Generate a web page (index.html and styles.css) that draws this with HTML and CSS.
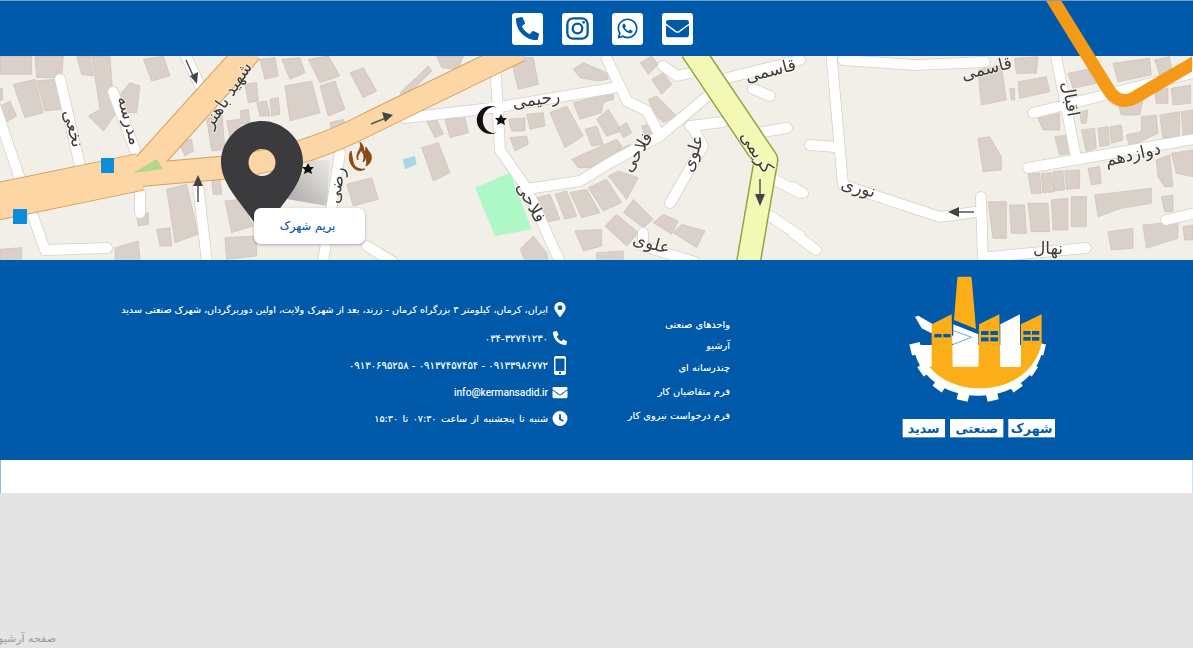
FILE: index.html
```html
<!DOCTYPE html>
<html lang="fa">

<head>
    <meta charset="UTF-8">
    <title>شهرک صنعتی سدید</title>
    <link rel="stylesheet" href="styles.css">
</head>

<body>
    <div class="page">
        <header class="social-bar">
            <a class="social-icon" href="#">
                <svg viewBox="0 0 512 512"><path d="M497.39 361.8l-112-48a24 24 0 0 0-28 6.9l-49.6 60.6A370.66 370.66 0 0 1 130.6 204.11l60.6-49.6a23.94 23.94 0 0 0 6.9-28l-48-112A24.16 24.16 0 0 0 122.6.61l-104 24A24 24 0 0 0 0 48c0 256.5 207.9 464 464 464a24 24 0 0 0 23.4-18.6l24-104a24.29 24.29 0 0 0-14.01-27.6z"/></svg>
            </a>
            <a class="social-icon" href="#">
                <svg viewBox="0 0 24 24"><rect class="line-icon" x="1.4" y="1.4" width="21.2" height="21.2" rx="6"/><circle class="line-icon" cx="12" cy="12" r="5"/><circle cx="18.4" cy="5.6" r="1.4"/></svg>
            </a>
            <a class="social-icon" href="#">
                <svg viewBox="0 0 448 512"><path d="M380.9 97.1C339 55.1 283.2 32 223.9 32c-122.4 0-222 99.6-222 222 0 39.1 10.2 77.3 29.6 111L0 480l117.7-30.9c32.4 17.7 68.9 27 106.1 27h.1c122.3 0 224.1-99.6 224.1-222 0-59.3-25.2-115-67.1-157zm-157 341.6c-33.2 0-65.7-8.9-94-25.7l-6.7-4-69.8 18.3L72 359.2l-4.4-7c-18.5-29.4-28.2-63.3-28.2-98.2 0-101.7 82.8-184.5 184.6-184.5 49.3 0 95.6 19.2 130.4 54.1 34.8 34.9 56.2 81.2 56.1 130.5 0 101.8-84.9 184.6-186.6 184.6zm101.2-138.2c-5.5-2.8-32.8-16.2-37.9-18-5.1-1.9-8.8-2.8-12.5 2.8-3.7 5.6-14.3 18-17.6 21.8-3.2 3.7-6.5 4.2-12 1.4-32.6-16.3-54-29.1-75.5-66-5.7-9.8 5.7-9.1 16.3-30.3 1.8-3.7.9-6.9-.5-9.7-1.4-2.8-12.5-30.1-17.1-41.2-4.5-10.8-9.1-9.3-12.5-9.5-3.2-.2-6.9-.2-10.6-.2-3.7 0-9.7 1.4-14.8 6.9-5.1 5.6-19.4 19-19.4 46.3 0 27.3 19.9 53.7 22.6 57.4 2.8 3.7 39.1 59.7 94.8 83.8 35.2 15.2 49 16.5 66.6 13.9 10.7-1.6 32.8-13.4 37.4-26.4 4.6-13 4.6-24.1 3.2-26.4-1.3-2.5-5-3.9-10.5-6.6z"/></svg>
            </a>
            <a class="social-icon" href="#">
                <svg viewBox="0 0 512 512"><path d="M502.3 190.8c3.9-3.1 9.7-.2 9.7 4.7V400c0 26.5-21.5 48-48 48H48c-26.5 0-48-21.5-48-48V195.6c0-5 5.7-7.8 9.7-4.7 22.4 17.4 52.1 39.5 154.1 113.6 21.1 15.4 56.7 47.8 92.2 47.6 35.7.3 72-32.8 92.3-47.6 102-74.1 131.6-96.3 154-113.7zM256 320c23.2.4 56.6-29.2 73.4-41.4 132.7-96.3 142.8-104.7 173.4-128.7 5.8-4.5 9.2-11.5 9.2-18.9v-19c0-26.5-21.5-48-48-48H48C21.5 64 0 85.5 0 112v19c0 7.4 3.4 14.3 9.2 18.9 30.6 23.9 40.7 32.4 173.4 128.7 16.8 12.2 50.2 41.8 73.4 41.4z"/></svg>
            </a>
            <svg class="route" viewBox="0 0 1193 110"><path d="M1051 -6L1109 88Q1119 105 1135 97L1200 59"/></svg>
        </header>

        <section class="map">
            <svg class="map-tiles" viewBox="0 56 1193 204">
                <defs>
                    <path id="streets" d="M60 79L80 166M113 92L135 150M-5 105L20 179M33 216L45 250L107 248M140 193V213M197 176L207 262M183 50L200 86M340 153L323 262M367 246L393 262M405 118L500 107L613 88M495 60L500 150L527 189L560 262M527 189L580 181L613 161L660 136L710 94M607 59L627 101L647 111L660 136M690 126L723 122M757 133L787 128M693 128L703 146L670 203M643 233V246L695 262M773 179L800 193M770 216L800 236M723 79L800 60M843 60L916 65L985 62M663 66L677 76L690 73M753 89L770 96M831 50L843 185M810 145L836 147M843 185L940 217L975 212M981 197L983 262M793 187L803 193M793 233L816 250M990 257L1086 248M1028 168L1200 138M1033 113L1200 71M1056 56L1076 157M1166 220L1200 212"/>
                    <linearGradient id="pin-shade" x1="0" y1="1" x2="1" y2="0">
                        <stop offset="0" stop-color="#a9a7a5"/>
                        <stop offset="1" stop-color="#ebe9e5"/>
                    </linearGradient>
                </defs>
                <rect class="ground" x="0" y="56" width="1193" height="204"/>

                <!-- buildings, coordinates at 3x so they are easier to read off -->
                <g class="buildings" transform="translate(0 56) scale(.3333)">
                    <polygon points="0,0 95,0 95,55 0,55"/><polygon points="105,0 190,0 185,65 110,65"/><polygon points="40,85 105,70 130,170 75,185"/><polygon points="110,75 165,70 185,160 135,165"/><polygon points="0,150 30,135 50,180 15,200"/><polygon points="0,95 8,100 8,130 0,135"/><polygon points="230,0 270,0 280,60 245,55"/><polygon points="275,0 330,0 340,140 390,80 420,90 410,170 350,170 310,225 265,180 300,160"/><polygon points="430,10 490,0 510,60 455,75"/><polygon points="780,10 825,5 835,60 795,70"/><polygon points="845,10 900,5 915,50 870,70"/><polygon points="925,10 985,0 1020,60 960,80"/><polygon points="1050,50 1090,35 1130,105 1090,125"/><polygon points="960,90 1005,75 1035,160 985,180"/><polygon points="855,90 935,75 960,170 870,195"/><polygon points="735,85 770,80 775,135 745,140"/><polygon points="770,140 800,135 810,180 780,180"/><polygon points="810,130 835,125 840,175 815,180"/><polygon points="620,190 665,165 675,280 635,285"/><polygon points="680,195 720,190 725,235 690,245"/><polygon points="720,165 745,160 750,200 725,205"/><polygon points="990,200 1030,190 1040,215 995,225"/><polygon points="535,255 575,250 580,285 555,300"/><polygon points="635,375 660,370 665,415 640,415"/><polygon points="500,400 560,385 595,535 525,560"/><polygon points="675,435 720,430 760,510 695,530"/><polygon points="470,520 510,515 515,570 480,570"/><polygon points="410,480 445,470 445,505 415,510"/><polygon points="1040,385 1115,365 1135,430 1060,450"/><polygon points="675,545 770,540 770,600 680,610"/><polygon points="345,575 415,555 420,615 345,615"/><polygon points="0,580 65,575 65,615 0,615"/>
                </g>
                <g class="buildings" transform="translate(400 56) scale(.3333)">
                    <polygon points="0,110 85,30 95,45 15,125"/><polygon points="110,0 190,0 175,40 125,35"/><polygon points="330,0 400,5 415,85 355,100"/><polygon points="520,40 550,20 620,50 625,70 590,75 540,65"/><polygon points="720,20 755,0 775,25 745,55"/><polygon points="755,70 790,50 815,85 785,115"/><polygon points="745,130 770,120 830,180 790,200 760,170"/><polygon points="520,140 640,110 640,130 610,140 605,170 540,190"/><polygon points="450,170 500,150 550,240 495,275"/><polygon points="590,190 625,160 665,225 620,240"/><polygon points="655,215 680,200 695,230 670,245"/><polygon points="555,220 590,210 610,265 575,270"/><polygon points="515,310 650,250 665,270 650,300 570,335 535,335"/><polygon points="650,285 690,265 705,285 665,310"/><polygon points="725,210 745,205 755,235 735,240"/><polygon points="80,195 110,190 130,235 105,245"/><polygon points="135,190 195,185 205,230 150,245"/><polygon points="325,190 375,185 375,225 335,225"/><polygon points="380,175 430,170 435,210 390,220"/><polygon points="330,245 380,240 385,265 345,285"/><polygon points="65,275 115,260 150,350 100,375"/><polygon points="410,425 450,415 480,490 435,500"/><polygon points="465,415 500,405 530,480 495,490"/><polygon points="510,410 560,400 600,470 545,485"/><polygon points="565,395 620,370 665,440 610,465"/><polygon points="625,360 655,345 715,365 680,430"/><polygon points="670,470 700,430 760,490 730,515"/><polygon points="615,510 650,475 715,530 680,570"/><polygon points="760,500 790,475 835,495 815,535"/><polygon points="820,530 845,505 915,525 890,575"/><polygon points="525,525 605,520 605,570 550,585"/><polygon points="360,580 400,540 440,590 445,615 375,615"/><polygon points="590,590 670,585 670,615 590,615"/>
                    <polygon class="park" points="225,395 330,350 395,520 285,540"/>
                    <polygon class="pool" points="8,310 45,300 50,325 15,340"/>
                </g>
                <g class="buildings" transform="translate(793 0) scale(.3333)">
                    <polygon points="555,210 625,195 640,300 565,315"/><polygon points="665,175 735,170 730,220 670,220"/><polygon points="675,245 760,230 770,275 680,295"/><polygon points="650,265 665,265 665,300 655,300"/><polygon points="825,220 900,205 910,250 840,265"/><polygon points="960,190 1070,175 1075,225 975,245"/><polygon points="1085,180 1130,170 1140,230 1100,225"/><polygon points="1085,270 1125,265 1125,310 1090,310"/><polygon points="1135,265 1193,255 1193,310 1140,315"/><polygon points="975,310 1050,300 1040,345 985,345"/><polygon points="735,355 800,340 800,390 750,390"/><polygon points="860,335 885,330 880,370 865,370"/><polygon points="1045,350 1090,345 1095,400 1010,440 1000,405 1045,395"/><polygon points="1100,345 1160,335 1160,410 1110,415"/><polygon points="1165,335 1200,330 1200,410 1170,405"/><polygon points="785,410 825,405 835,460 800,465"/><polygon points="865,390 905,385 910,445 880,455"/><polygon points="915,385 945,380 950,435 920,440"/><polygon points="950,380 985,375 990,420 955,430"/><polygon points="555,415 590,410 625,470 625,510 570,515"/><polygon points="705,520 740,520 745,580 715,580"/><polygon points="745,520 775,518 785,575 750,578"/><polygon points="780,515 810,512 815,570 785,572"/><polygon points="815,512 860,510 860,565 820,568"/><polygon points="885,505 920,500 925,550 895,555"/><polygon points="1090,480 1130,465 1140,560 1115,560 1095,530"/><polygon points="1135,460 1200,450 1200,530 1150,520"/><polygon points="905,585 1075,565 1075,610 985,625 915,650"/><polygon points="1105,590 1140,585 1140,635 1115,635"/><polygon points="585,605 640,605 640,715 600,715"/><polygon points="650,615 695,615 700,700 655,700"/><polygon points="705,610 765,610 770,695 715,695"/><polygon points="775,600 825,595 825,690 780,690"/><polygon points="835,590 880,590 880,680 835,680"/><polygon points="945,695 1020,685 1020,745 955,750"/><polygon points="1050,675 1155,665 1155,715 1060,745"/><polygon points="1170,680 1200,675 1200,720 1175,720"/>
                </g>
                <polygon points="287,199 327,206 330,160 310,160" fill="url(#pin-shade)"/>

                <use href="#streets" class="street-casing"/>
                <use href="#streets" class="street-fill"/>

                <path class="secondary-casing" d="M692 50L766 160L748 265"/>
                <path class="secondary-fill" d="M692 50L766 160L748 265"/>

                <path class="primary-casing" d="M-10 203L140 172"/>
                <path class="primary-casing thin" d="M140 175L220 168Q300 160 370 123L520 50"/>
                <path class="primary-casing branch" d="M140 172L250 50"/>
                <path class="primary-fill" d="M-10 203L140 172"/>
                <path class="primary-fill thin" d="M140 175L220 168Q300 160 370 123L520 50"/>
                <path class="primary-fill branch" d="M140 172L250 50"/>
                <polygon class="island" points="133,173 157,159 163,169"/>

                <rect class="bus-stop" x="101" y="158" width="13" height="15"/>
                <rect class="bus-stop" x="13" y="209" width="14" height="15"/>

                <g class="street-labels">
                    <text transform="translate(232 98) rotate(-57)">شهید باهنر</text>
                    <text transform="translate(124 122) rotate(75)">مدرسه</text>
                    <text transform="translate(68 130) rotate(75)">نخعی</text>
                    <text transform="translate(537 105) rotate(-8)">رحیمی</text>
                    <text transform="translate(642 155) rotate(-58)">فلاحی</text>
                    <text transform="translate(526 205) rotate(62)">فلاحی</text>
                    <text transform="translate(698 155) rotate(-72)">علوی</text>
                    <text transform="translate(752 155) rotate(58)">کریمی</text>
                    <text transform="translate(772 76) rotate(-14)">قاسمی</text>
                    <text transform="translate(988 74) rotate(-14)">قاسمی</text>
                    <text transform="translate(1065 100) rotate(80)">اقبال</text>
                    <text transform="translate(1134 160) rotate(-13)">دوازدهم</text>
                    <text transform="translate(857 193) rotate(15)">نوری</text>
                    <text transform="translate(650 249) rotate(15)">علوی</text>
                    <text transform="translate(342 186) rotate(-80)">رضی</text>
                    <text transform="translate(1048 254)">نهال</text>
                </g>

                <g class="arrows">
                    <path d="M186 60L194 78"/><polygon points="197,84 198,72 190,76"/>
                    <path d="M371 124L386 118"/><polygon points="393,115 382,112 385,122"/>
                    <path d="M198 202V182"/><polygon points="198,175 193,186 203,186"/>
                    <path d="M760 179V198"/><polygon points="760,206 755,194 765,194"/>
                    <path d="M974 212H956"/><polygon points="948,212 959,207 959,217"/>
                </g>

                <!-- mosque -->
                <path class="poi" d="M498 108A14 14 0 1 0 498 132A11 13 0 1 1 498 108Z"/>
                <polygon class="poi" points="501,114 503,118 507,118 504,121 505,125 501,123 497,125 498,121 495,118 499,118"/>
                <polygon class="poi" points="308,163 310,167 314,167 311,170 312,174 308,172 304,174 305,170 302,167 306,167"/>

                <!-- fuel -->
                <path class="fuel" d="M360 142c2 7 -3 9 -3 14c0 2 0 3 1 4c-1-5 2-7 3-10c3 4 4 7 2 12c2-1 2-3 2-5c2 3 2 6 1 9c4-2 6-6 5-11c-1-3-3-4-5-8c0 3-1 4-2 5c0-4-1-7-4-10zM351 151c-3 5-2 12 3 17c3 3 8 3 11 1c-6 1-11-2-12-7c-1-4-1-7-2-11z"/>

                <!-- location pin -->
                <path class="pin" fill-rule="evenodd" d="M262 121C240 121 221 140 221 162C221 187 246 206 262 235C278 206 303 187 303 162C303 140 284 121 262 121ZM262 149A13.500 13.500 0 1 1 262 176A13.500 13.500 0 1 1 262 149Z"/>
            </svg>
            <a class="map-button" href="#">بریم شهرک</a>
        </section>

        <footer class="site-footer">
            <svg class="logo" viewBox="0 0 600 555">
                <g class="gear">
                    <path d="M100 240H490C480 330 400 392 295 392C190 392 110 330 100 240Z"/>
                    <g transform="translate(293 205)">
                        <rect x="-17" y="175" width="34" height="32" transform="rotate(13)"/>
                        <rect x="-17" y="175" width="34" height="32" transform="rotate(-13)"/>
                        <rect x="-17" y="175" width="34" height="32" transform="rotate(36)"/>
                        <rect x="-17" y="175" width="34" height="32" transform="rotate(-36)"/>
                        <rect x="-17" y="175" width="34" height="32" transform="rotate(56)"/>
                        <rect x="-17" y="175" width="34" height="32" transform="rotate(-56)"/>
                        <rect x="-17" y="175" width="34" height="32" transform="rotate(76)"/>
                        <rect x="-17" y="175" width="34" height="32" transform="rotate(-76)"/>
                    </g>
                    <polygon points="105,155 115,152 240,225 225,240 125,190"/>
                </g>
                <path class="logo-yellow" d="M232 39Q232 35 237 35H270Q275 35 275 39L288 192L222 165Z"/>
                <path class="logo-yellow" d="M155 178L215 148L218 305H295L297 178L358 148L361 305H423V178L485 148V235C465 325 385 370 300 370C235 370 180 345 148 305H155Z"/>
                <polygon class="gear-fill" points="220,178 295,208 295,300 220,300"/>
                <polygon class="gear-fill" points="361,178 420,148 420,305 361,305"/>
                <polyline class="logo-chevron" points="220,197 275,217 220,238"/>
                <g class="logo-windows">
                    <rect x="163" y="207" width="22" height="10"/><rect x="190" y="207" width="22" height="10"/>
                    <rect x="303" y="198" width="23" height="12"/><rect x="331" y="198" width="23" height="12"/>
                    <rect x="303" y="217" width="23" height="12"/><rect x="331" y="217" width="23" height="12"/>
                    <rect x="430" y="198" width="22" height="11"/><rect x="456" y="198" width="22" height="11"/>
                    <rect x="430" y="216" width="22" height="11"/><rect x="456" y="216" width="22" height="11"/>
                </g>
                <g class="logo-name">
                    <rect x="68" y="462" width="127" height="55"/>
                    <rect x="210" y="462" width="160" height="55"/>
                    <rect x="385" y="462" width="140" height="55"/>
                    <text x="131" y="503">سدید</text>
                    <text x="290" y="503">صنعتی</text>
                    <text x="455" y="503">شهرک</text>
                </g>
            </svg>

            <nav class="footer-links">
                <a href="#">واحدهای صنعتی</a>
                <a href="#">آرشیو</a>
                <a href="#">چندرسانه ای</a>
                <a href="#">فرم متقاضیان کار</a>
                <a href="#">فرم درخواست نیروی کار</a>
            </nav>

            <ul class="contact-list">
                <li>
                    <svg class="contact-icon" viewBox="0 0 384 512"><path d="M172.3 501.700C27 291 0 269.400 0 192 0 86 86 0 192 0s192 86 192 192c0 77.400-27 99-172.300 309.700-9.500 13.800-29.900 13.800-39.400 0zM192 272c44.200 0 80-35.800 80-80s-35.800-80-80-80-80 35.800-80 80 35.800 80 80 80z"/></svg>
                    <span>ایران، کرمان، کیلومتر ۳ بزرگراه کرمان - زرند، بعد از شهرک ولایت، اولین دوربرگردان، شهرک صنعتی سدید</span>
                </li>
                <li>
                    <svg class="contact-icon small" viewBox="0 0 512 512"><path d="M497.39 361.8l-112-48a24 24 0 0 0-28 6.9l-49.6 60.6A370.66 370.66 0 0 1 130.6 204.11l60.6-49.6a23.94 23.94 0 0 0 6.9-28l-48-112A24.16 24.16 0 0 0 122.6.61l-104 24A24 24 0 0 0 0 48c0 256.5 207.9 464 464 464a24 24 0 0 0 23.4-18.6l24-104a24.29 24.29 0 0 0-14.01-27.6z"/></svg>
                    <span class="digits">۰۳۴-۳۲۷۴۱۲۳۰</span>
                </li>
                <li>
                    <svg class="contact-icon tall" viewBox="0 0 12 19"><path fill-rule="evenodd" d="M2 0H10A2 2 0 0 1 12 2V17A2 2 0 0 1 10 19H2A2 2 0 0 1 0 17V2A2 2 0 0 1 2 0ZM1.500 2.500V15H10.500V2.500ZM6 15.800A1.200 1.200 0 1 0 6 18.200A1.200 1.200 0 1 0 6 15.800Z"/></svg>
                    <span class="digits">۰۹۱۳۳۹۸۶۷۷۲ - ۰۹۱۳۷۴۵۷۴۵۴ - ۰۹۱۳۰۶۹۵۲۵۸</span>
                </li>
                <li>
                    <svg class="contact-icon" viewBox="0 0 512 512"><path d="M502.3 190.8c3.9-3.1 9.7-.2 9.7 4.7V400c0 26.5-21.5 48-48 48H48c-26.5 0-48-21.5-48-48V195.6c0-5 5.7-7.8 9.7-4.7 22.4 17.4 52.1 39.5 154.1 113.6 21.1 15.4 56.7 47.8 92.2 47.6 35.7.3 72-32.8 92.3-47.6 102-74.1 131.6-96.3 154-113.7zM256 320c23.2.4 56.6-29.2 73.4-41.4 132.7-96.3 142.8-104.7 173.4-128.7 5.8-4.5 9.2-11.5 9.2-18.9v-19c0-26.5-21.5-48-48-48H48C21.5 64 0 85.5 0 112v19c0 7.4 3.4 14.3 9.2 18.9 30.6 23.9 40.7 32.4 173.4 128.7 16.8 12.2 50.2 41.8 73.4 41.4z"/></svg>
                    <span class="latin">info@kermansadid.ir</span>
                </li>
                <li>
                    <svg class="contact-icon" viewBox="0 0 24 24"><path fill-rule="evenodd" d="M12 0A12 12 0 1 1 12 24A12 12 0 1 1 12 0ZM10.500 5V13.500L16.500 17L18 14.800L13.500 12.200V5Z"/></svg>
                    <span class="hours">شنبه تا پنجشنبه از ساعت ۰۷:۳۰ تا ۱۵:۳۰</span>
                </li>
            </ul>
        </footer>

        <div class="white-strip"></div>
    </div>

    <div class="archive-area">
        <p class="archive-title">صفحه آرشیو</p>
    </div>
</body>

</html>
```

FILE: styles.css
```css
* {
    box-sizing: border-box;
}

body {
    margin: 0;
    font-family: "DejaVu Sans", "Noto Sans", sans-serif;
    background-color: #e4e4e4;
    overflow: hidden;
}

a {
    color: inherit;
    text-decoration: none;
}

.page {
    position: relative;
}

/* top bar */
.social-bar {
    position: relative;
    display: flex;
    justify-content: center;
    align-items: center;
    gap: 19px;
    height: 56px;
    padding-left: 12px;
    background-color: #005aa9;
    border-top: 1px solid #6c9ecf;
}

.social-icon {
    display: flex;
    justify-content: center;
    align-items: center;
    width: 31px;
    height: 32px;
    background-color: #fff;
    border-radius: 3px;
}

.social-icon svg {
    width: 23px;
    height: 23px;
    fill: #005aa9;
}

.line-icon {
    fill: none;
    stroke: #005aa9;
    stroke-width: 2.4;
}

.route {
    position: absolute;
    top: 0;
    left: 0;
    width: 1192px;
    height: 110px;
    z-index: 2;
    overflow: hidden;
}

.route path {
    fill: none;
    stroke: #f49a16;
    stroke-width: 13;
}

/* map */
.map {
    position: relative;
    height: 204px;
    overflow: hidden;
}

.map-tiles {
    display: block;
    width: 1193px;
    height: 204px;
    filter: blur(0.7px);
}

.ground {
    fill: #f2efe9;
}

.buildings polygon {
    fill: #d9d0c9;
    stroke: #cbbfb5;
    stroke-width: 2;
}

.buildings .park {
    fill: #aef8c8;
    stroke: none;
}

.buildings .pool {
    fill: #a5d8e4;
    stroke: none;
}

.street-casing,
.street-fill,
.secondary-casing,
.secondary-fill,
.primary-casing,
.primary-fill {
    fill: none;
}

.street-casing {
    stroke: #d5d0c9;
    stroke-width: 11.5;
    stroke-linecap: round;
    stroke-linejoin: round;
}

.street-fill {
    stroke: #fff;
    stroke-width: 10;
    stroke-linecap: round;
    stroke-linejoin: round;
}

.secondary-casing {
    stroke: #8fa83c;
    stroke-width: 25;
    stroke-linejoin: round;
}

.secondary-fill {
    stroke: #f3f8b5;
    stroke-width: 22;
    stroke-linejoin: round;
}

.primary-casing {
    stroke: #d5a05c;
    stroke-width: 38;
}

.primary-fill {
    stroke: #fcd6a4;
    stroke-width: 36;
}

.primary-casing.thin {
    stroke-width: 24;
}

.primary-fill.thin {
    stroke-width: 22;
}

.primary-casing.branch {
    stroke-width: 27;
}

.primary-fill.branch {
    stroke-width: 25;
}

.island {
    fill: #b5d48c;
}

.bus-stop {
    fill: #0a8fdc;
}

.street-labels text {
    font-size: 17px;
    fill: #3e3a36;
    text-anchor: middle;
    direction: rtl;
    paint-order: stroke;
    stroke: rgba(255, 255, 255, 0.5);
    stroke-width: 2px;
}

.arrows path {
    fill: none;
    stroke: #555;
    stroke-width: 1.5;
}

.arrows polygon {
    fill: #444;
}

.poi {
    fill: #111;
}

.fuel {
    fill: #8a4a12;
    stroke: #8a4a12;
    stroke-width: 1;
}

.pin {
    fill: #3b3b3d;
}

.map-button {
    position: absolute;
    top: 152px;
    left: 254px;
    display: flex;
    justify-content: center;
    align-items: center;
    width: 111px;
    height: 36px;
    padding-right: 4px;
    background-color: #fff;
    border-radius: 7px;
    box-shadow: 0 1px 3px rgba(0, 0, 0, 0.3);
    color: #0b5cad;
    font-size: 11.5px;
    text-shadow: 0 0 0.4px rgba(11, 92, 173, 0.5);
}

/* footer */
.site-footer {
    display: flex;
    direction: rtl;
    align-items: flex-start;
    height: 200px;
    padding: 5px 113px 0 0;
    background-color: #005aa9;
    color: #fff;
    text-shadow: 0 0 0.5px rgba(255, 255, 255, 0.5);
}

.logo {
    flex: none;
    width: 200px;
    height: 185px;
    margin-left: 150px;
}

.gear path,
.gear rect,
.gear polygon,
.gear-fill {
    fill: #fff;
}

.logo-yellow {
    fill: #fbae17;
}

.logo-chevron {
    fill: none;
    stroke: #7fa5cf;
    stroke-width: 3;
}

.logo-windows rect {
    fill: #005aa9;
}

.logo-name rect {
    fill: #fff;
}

.logo-name text {
    fill: #005aa9;
    font-size: 38px;
    font-weight: 700;
    text-anchor: middle;
    direction: rtl;
}

.footer-links {
    flex: none;
    display: grid;
    grid-template-rows: 21px 21px 23px 24px 25px;
    align-items: center;
    width: 160px;
    margin-top: 49px;
    font-size: 9.8px;
}

.contact-list {
    display: grid;
    grid-template-rows: 29px 28px 27px 26px 26px;
    margin: 30px 0 0;
    padding: 0;
    list-style: none;
    font-size: 9.6px;
}

.contact-list li {
    display: flex;
    align-items: center;
    gap: 2px;
    white-space: nowrap;
}

.contact-icon {
    flex: none;
    width: 20px;
    height: 15px;
    fill: #fff;
}

.contact-icon.small {
    height: 14px;
}

.contact-icon.tall {
    height: 19px;
}

.digits {
    font-size: 10.1px;
}

.hours {
    word-spacing: 1.4px;
}

.latin {
    font-family: Roboto, sans-serif;
    font-size: 10.200px;
}

.white-strip {
    height: 33px;
    background-color: #fff;
    border-left: 1px solid #8bbbe8;
    border-right: 1px solid #cfe0f2;
}

/* bottom area */
.archive-area {
    display: flex;
    flex-direction: column;
    justify-content: flex-end;
    height: 155px;
}

.archive-title {
    width: 56px;
    margin: 0 0 3px;
    direction: rtl;
    white-space: nowrap;
    color: #999;
    font-size: 11px;
}
```
